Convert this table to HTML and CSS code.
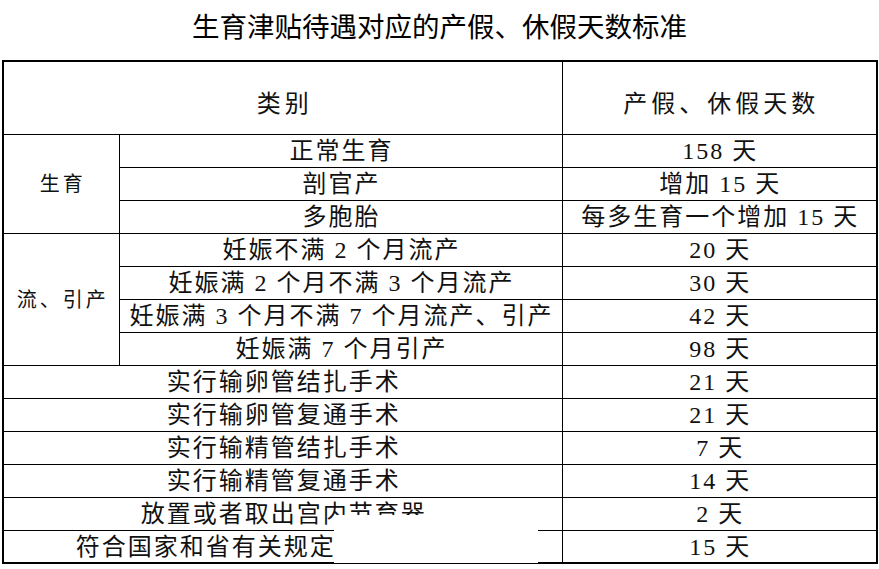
FILE: index.html
```html
<!DOCTYPE html>
<html lang="zh-CN">
<head>
<meta charset="utf-8">
<title>生育津贴待遇对应的产假、休假天数标准</title>
<link rel="stylesheet" href="styles.css">
</head>
<body>
<div class="page">
  <h1 class="title">生育津贴待遇对应的产假、休假天数标准</h1>
  <table class="std">
    <colgroup>
      <col class="c1"><col class="c2"><col class="c3">
    </colgroup>
    <thead>
      <tr class="head">
        <th colspan="2">类别</th>
        <th>产假、休假天数</th>
      </tr>
    </thead>
    <tbody>
      <tr><td class="group" rowspan="3">生育</td><td>正常生育</td><td>158 天</td></tr>
      <tr><td>剖官产</td><td>增加 15 天</td></tr>
      <tr><td>多胞胎</td><td>每多生育一个增加 15 天</td></tr>
      <tr><td class="group" rowspan="4">流、引产</td><td>妊娠不满 2 个月流产</td><td>20 天</td></tr>
      <tr><td>妊娠满 2 个月不满 3 个月流产</td><td>30 天</td></tr>
      <tr><td>妊娠满 3 个月不满 7 个月流产、引产</td><td>42 天</td></tr>
      <tr><td>妊娠满 7 个月引产</td><td>98 天</td></tr>
      <tr><td colspan="2">实行输卵管结扎手术</td><td>21 天</td></tr>
      <tr><td colspan="2">实行输卵管复通手术</td><td>21 天</td></tr>
      <tr><td colspan="2">实行输精管结扎手术</td><td>7 天</td></tr>
      <tr><td colspan="2">实行输精管复通手术</td><td>14 天</td></tr>
      <tr><td colspan="2">放置或者取出宫内节育器</td><td>2 天</td></tr>
      <tr><td colspan="2">符合国家和省有关规定的男方看护假</td><td>15 天</td></tr>
    </tbody>
  </table>
  <div class="watermark" aria-hidden="true"></div>
</div>
</body>
</html>
```
FILE: styles.css
```css
html, body {
  margin: 0;
  padding: 0;
  background: #fff;
}

.page {
  position: relative;
  width: 879px;
  height: 569px;
  overflow: hidden;
}

.title {
  margin: 0;
  height: 60px;
  line-height: 50px;
  text-align: center;
  font-family: "Noto Sans CJK SC", sans-serif;
  font-size: 27.5px;
  font-weight: 400;
  color: #000;
}

.std {
  margin-left: 2px;
  width: 874px;
  border-collapse: collapse;
  table-layout: fixed;
  border: 2px solid #000;
  font-family: "Liberation Serif", "Times New Roman", "Noto Sans CJK SC", serif;
  font-weight: 400;
  color: #111;
}

.c1 { width: 116px; }
.c2 { width: 443px; }
.c3 { width: 315px; }

.std th,
.std td {
  border: 1px solid #000;
  padding: 0;
  text-align: center;
  vertical-align: middle;
  white-space: nowrap;
  overflow: hidden;
}

.head th {
  height: 73px;
  padding-top: 8px;
  padding-left: 4px;
  font-size: 24px;
  font-weight: 400;
  letter-spacing: 4px;
  box-sizing: border-box;
}

.std tbody td {
  height: 33px;
  line-height: 30px;
  padding-top: 1px;
  padding-left: 2px;
  font-size: 24px;
  letter-spacing: 2px;
  box-sizing: border-box;
}

.std tbody td.group {
  font-size: 20px;
  letter-spacing: 3px;
  padding-left: 3px;
}

.watermark {
  position: absolute;
  left: 334px;
  top: 515px;
  width: 204px;
  height: 48px;
  background: #fff;
}
```
